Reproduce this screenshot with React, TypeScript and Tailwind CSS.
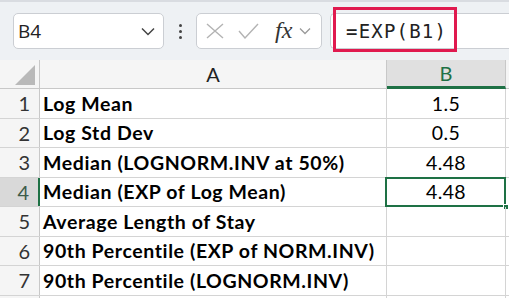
import React from "react";

const rows: { n: number; label: string; value: string }[] = [
  { n: 1, label: "Log Mean", value: "1.5" },
  { n: 2, label: "Log Std Dev", value: "0.5" },
  { n: 3, label: "Median (LOGNORM.INV at 50%)", value: "4.48" },
  { n: 4, label: "Median (EXP of Log Mean)", value: "4.48" },
  { n: 5, label: "Average Length of Stay", value: "" },
  { n: 6, label: "90th Percentile (EXP of NORM.INV)", value: "" },
  { n: 7, label: "90th Percentile (LOGNORM.INV)", value: "" },
];

export default function App() {
  return (
    <div
      className="relative w-[509px] h-[298px] overflow-hidden bg-white"
      style={{ fontFamily: "Lato, 'Noto Sans', sans-serif" }}
    >
      {/* Toolbar */}
      <div className="h-[60px] bg-[#eef1f4] border-t-[2px] border-[#d9dce1] flex items-start pt-[11px]">
        {/* Name box */}
        <div className="ml-[13px] w-[151px] h-[36px] rounded-[5px] border border-[#cbced3] bg-white flex items-center pl-[4px] pr-[8px]">
          <span
            className="text-[19px] text-[#222] flex-1 leading-none"
            style={{ fontFamily: "'Open Sans', 'Noto Sans', sans-serif" }}
          >
            B4
          </span>
          <svg width="14" height="9" viewBox="0 0 14 9">
            <path d="M1 1.5 L7 7.5 L13 1.5" fill="none" stroke="#444" strokeWidth="1.5" />
          </svg>
        </div>
        {/* dots */}
        <div className="w-[32px] h-[36px] flex flex-col items-center justify-center gap-[3px]">
          <div className="w-[3px] h-[3px] bg-[#444] rounded-full" />
          <div className="w-[3px] h-[3px] bg-[#444] rounded-full" />
          <div className="w-[3px] h-[3px] bg-[#444] rounded-full" />
        </div>
        {/* icon box */}
        <div className="w-[126px] h-[36px] rounded-[5px] border border-[#cbced3] bg-white flex items-center">
          <svg width="18" height="16" viewBox="0 0 18 16" className="ml-[9px]">
            <path d="M1 1 L17 15 M17 1 L1 15" stroke="#b3b3b3" strokeWidth="1.4" fill="none" />
          </svg>
          <svg width="21" height="16" viewBox="0 0 21 16" className="ml-[14px]">
            <path d="M1 8 L7 15 L20 1" stroke="#b3b3b3" strokeWidth="1.4" fill="none" />
          </svg>
          <span
            className="ml-[16px] text-[24px] italic text-[#333] leading-none -mt-[3px]"
            style={{ fontFamily: "'Liberation Serif', 'DejaVu Serif', serif" }}
          >
            fx
          </span>
          <svg width="12" height="8" viewBox="0 0 12 8" className="ml-[7px]">
            <path d="M1 1.5 L6 6.5 L11 1.5" fill="none" stroke="#9a9a9a" strokeWidth="1.3" />
          </svg>
        </div>
        {/* formula bar */}
        <div className="ml-[8px] flex-1 h-[36px] rounded-l-[5px] border border-r-0 border-[#cbced3] bg-white flex items-center pl-[15px]">
          <span
            className="text-[19px] text-[#222] tracking-[1.2px] leading-none"
            style={{ fontFamily: "'DejaVu Sans Mono', 'Liberation Mono', monospace" }}
          >
            =EXP(B1)
          </span>
        </div>
      </div>

      {/* Red highlight annotation */}
      <div className="absolute left-[333px] top-[7px] w-[124px] h-[45px] border-[3px] border-[#e01a4f]" />

      {/* Grid */}
      <div className="flex flex-col">
        {/* Header row */}
        <div className="flex h-[29px] border-b border-[#c8c8c8] bg-[#f5f5f5]">
          <div className="relative w-[40px] border-r border-[#c8c8c8]">
            <svg width="20" height="20" viewBox="0 0 20 20" className="absolute right-[4px] bottom-[3px]">
              <path d="M20 0 L20 20 L0 20 Z" fill="#b9b9b9" />
            </svg>
          </div>
          <div className="w-[347px] border-r border-[#c8c8c8] flex items-center justify-center text-[20px] text-[#222]">
            A
          </div>
          <div className="w-[119px] bg-[#e0e0e0] border-b-[3px] border-[#1e7145] -mb-px flex items-center justify-center text-[20px] text-[#1e7145] border-r border-r-[#c8c8c8]">
            B
          </div>
          <div className="flex-1" />
        </div>

        {rows.map((r) => {
          const active = r.n === 4;
          return (
            <div key={r.n} className="flex h-[29.5px] border-b border-[#d4d4d4]">
              <div
                className={
                  active
                    ? "w-[40px] bg-[#d9d9d9] border-r-[2px] border-[#1e7145] flex items-center justify-end pr-[9px] text-[20px] text-[#3d5c4a]"
                    : "w-[40px] bg-[#f5f5f5] border-r border-[#c8c8c8] flex items-center justify-end pr-[9px] text-[20px] text-[#333]"
                }
              >
                {r.n}
              </div>
              <div className="w-[347px] border-r border-[#d4d4d4] flex items-center pl-[3px] text-[19.5px] tracking-[0.6px] font-bold text-black whitespace-nowrap overflow-hidden">
                {r.label}
              </div>
              <div className="relative w-[119px] border-r border-[#d4d4d4] flex items-center justify-center text-[19.5px] tracking-[0.4px] text-black">
                {r.value}
                {active && (
                  <>
                    <div className="absolute -left-[2px] -top-[1px] -right-[1px] -bottom-[1px] border-[2px] border-[#1e7145]" />
                    <div className="absolute -right-[4px] -bottom-[4px] w-[6px] h-[6px] bg-[#1e7145] border border-white" />
                  </>
                )}
              </div>
              <div className="flex-1" />
            </div>
          );
        })}
        <div className="flex h-[30px]">
          <div className="w-[40px] bg-[#f5f5f5] border-r border-[#c8c8c8]" />
          <div className="w-[347px] border-r border-[#d4d4d4]" />
          <div className="w-[119px] border-r border-[#d4d4d4]" />
        </div>
      </div>
    </div>
  );
}
